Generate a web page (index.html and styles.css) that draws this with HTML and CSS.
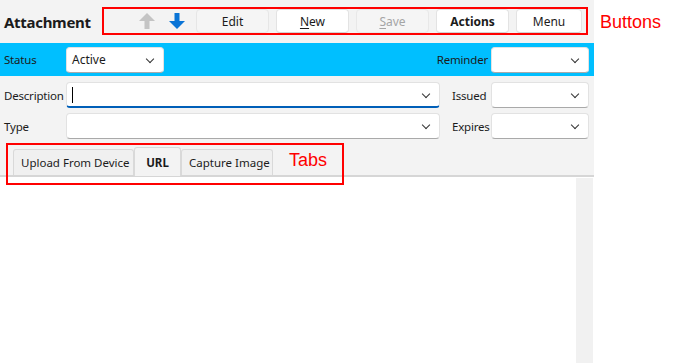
FILE: index.html
```html
<!doctype html>
<html>
    <head>
        <title>Attachment</title>
        <link rel="stylesheet" href="styles.css">
    </head>
    <body>
        <div class="page">
            <div class="panel">
                <header class="top">
                    <h1 class="title">Attachment</h1>
                    <div class="toolbar">
                        <svg class="arrow" width="16" height="16" viewBox="0 0 16 16"><path d="M8 0 L16 8 L10.5 8 L10.5 16 L5.5 16 L5.5 8 L0 8 Z" fill="#c4c4c4"/></svg>
                        <svg class="arrow" width="16" height="16" viewBox="0 0 16 16"><path d="M8 16 L16 8 L10.5 8 L10.5 0 L5.5 0 L5.5 8 L0 8 Z" fill="#0a74d6"/></svg>
                        <button type="button" class="btn btn-plain">Edit</button>
                        <button type="button" class="btn"><u>N</u>ew</button>
                        <button type="button" class="btn btn-off" disabled><u>S</u>ave</button>
                        <button type="button" class="btn btn-bold">Actions</button>
                        <button type="button" class="btn btn-menu">Menu</button>
                    </div>
                </header>

                <div class="statusbar">
                    <label class="lbl">Status</label>
                    <div class="select sel-status">Active<span class="chev"></span></div>
                    <label class="lbl lbl-right">Reminder</label>
                    <div class="select sel-small"><span class="chev"></span></div>
                </div>

                <div class="fields">
                    <label class="lbl">Description</label>
                    <div class="select focus"><span class="caret"></span><span class="chev"></span></div>
                    <label class="lbl lbl-side">Issued</label>
                    <div class="select"><span class="chev"></span></div>

                    <label class="lbl">Type</label>
                    <div class="select"><span class="chev"></span></div>
                    <label class="lbl lbl-side">Expires</label>
                    <div class="select"><span class="chev"></span></div>
                </div>

                <div class="tabs">
                    <div class="tab">Upload From Device</div>
                    <div class="tab tab-on">URL</div>
                    <div class="tab">Capture Image</div>
                    <span class="note">Tabs</span>
                    <div class="mark"></div>
                </div>

                <div class="content">
                    <div class="blank"></div>
                    <div class="scroll"></div>
                </div>
            </div>
            <aside class="side">
                <span class="note">Buttons</span>
            </aside>
        </div>
    </body>
</html>
```

FILE: styles.css
```css
* {
    box-sizing: border-box;
}
html,
body {
    margin: 0;
    padding: 0;
    height: 100%;
    background-color: #fff;
}
body {
    font-family: "Noto Sans", "Open Sans", sans-serif;
    font-size: 12px;
    color: #1b1b1b;
}
.page {
    display: flex;
    height: 100vh;
}
.panel {
    width: 594px;
    flex-shrink: 0;
    display: flex;
    flex-direction: column;
    background-color: #f3f3f3;
}
.side {
    padding: 12px 0 0 6px;
}
.note {
    font-family: "Liberation Sans", Arial, sans-serif;
    font-size: 18px;
    letter-spacing: 0;
    color: #ff0000;
}

/* header */
.top {
    height: 43px;
    display: flex;
    align-items: flex-start;
}
.title {
    margin: 13px 0 0 4px;
    width: 86px;
    font-size: 15px;
    font-weight: 700;
    letter-spacing: -0.3px;
    line-height: 18px;
    white-space: nowrap;
}
.toolbar {
    margin: 7px 0 0 12px;
    width: 486px;
    height: 28px;
    border: 2px solid #ff0000;
    display: flex;
    align-items: stretch;
    padding: 0 4px 0 35px;
}
.arrow {
    align-self: center;
    margin-right: 14px;
}
.arrow + .arrow {
    margin-right: 11px;
}
.btn {
    width: 73px;
    margin-right: 7px;
    padding: 0;
    font: inherit;
    font-size: 12px;
    color: #1b1b1b;
    background-color: #fff;
    border: 1px solid #e3e3e3;
    border-bottom-color: #d2d2d2;
    border-radius: 4px;
}
.btn u {
    text-underline-offset: 2px;
}
.btn-plain {
    background-color: #f5f5f5;
    border-color: #e6e6e6;
}
.btn-off {
    background-color: #f5f5f5;
    border-color: #e8e8e8;
    color: #a5a5a5;
}
.btn-bold {
    font-weight: 700;
}
.btn-menu {
    width: 66px;
    margin-right: 0;
}

/* status bar */
.statusbar {
    height: 33px;
    background-color: #00bfff;
    display: flex;
    align-items: center;
    padding: 0 5px 0 0;
}
.lbl {
    padding-left: 4px;
    width: 66px;
    flex-shrink: 0;
    font-size: 11.5px;
    letter-spacing: -0.2px;
    white-space: nowrap;
}
.lbl-right {
    margin-left: auto;
    width: auto;
    padding-right: 3px;
}
.select {
    position: relative;
    height: 26px;
    background-color: #fff;
    border: 1px solid #e2e2e2;
    border-bottom-color: #a9a9a9;
    border-radius: 4px;
    display: flex;
    align-items: center;
    padding-left: 5px;
    font-size: 12px;
}
.sel-status {
    width: 98px;
}
.sel-small {
    width: 98px;
}
.chev {
    position: absolute;
    right: 10px;
    top: 8px;
    width: 6px;
    height: 6px;
    border-right: 1px solid #333;
    border-bottom: 1px solid #333;
    transform: rotate(45deg);
}
.caret {
    width: 1px;
    height: 16px;
    background-color: #000;
}
.select.focus {
    border-bottom: 2px solid #005fb8;
}

/* description / type */
.fields {
    display: grid;
    grid-template-columns: 62px 374px 51px 98px;
    grid-auto-rows: 26px;
    row-gap: 5px;
    align-items: center;
    padding: 6px 0 0 4px;
}
.fields .lbl {
    padding-left: 0;
    width: auto;
}
.fields .lbl-side {
    padding-left: 12px;
}

/* tabs */
.tabs {
    position: relative;
    display: flex;
    align-items: flex-end;
    margin-top: 8px;
    height: 30px;
    padding-left: 13px;
    border-bottom: 2px solid #d6d6d6;
}
.tab {
    height: 26px;
    padding: 0 7px;
    display: flex;
    align-items: center;
    font-size: 11.5px;
    background-color: #f0f0f0;
    border: 1px solid #d9d9d9;
    border-bottom: none;
    border-radius: 3px 3px 0 0;
    white-space: nowrap;
}
.tab:first-child {
    width: 121px;
}
.tab-on {
    height: 29px;
    width: 47px;
    justify-content: center;
    font-weight: 700;
    background-color: #f3f3f3;
    margin-bottom: -1px;
}
.tab:nth-child(3) {
    width: 92px;
}
.tabs .note {
    margin: 0 0 4px 16px;
}
.mark {
    position: absolute;
    left: 6px;
    top: -4px;
    width: 338px;
    height: 42px;
    border: 2px solid #ff0000;
}

/* content */
.content {
    flex: 1;
    display: flex;
    background-color: #fff;
}
.blank {
    flex: 1;
}
.scroll {
    width: 17px;
    margin: 1px 1px 0 0;
    background-color: #f1f1f1;
}
```
